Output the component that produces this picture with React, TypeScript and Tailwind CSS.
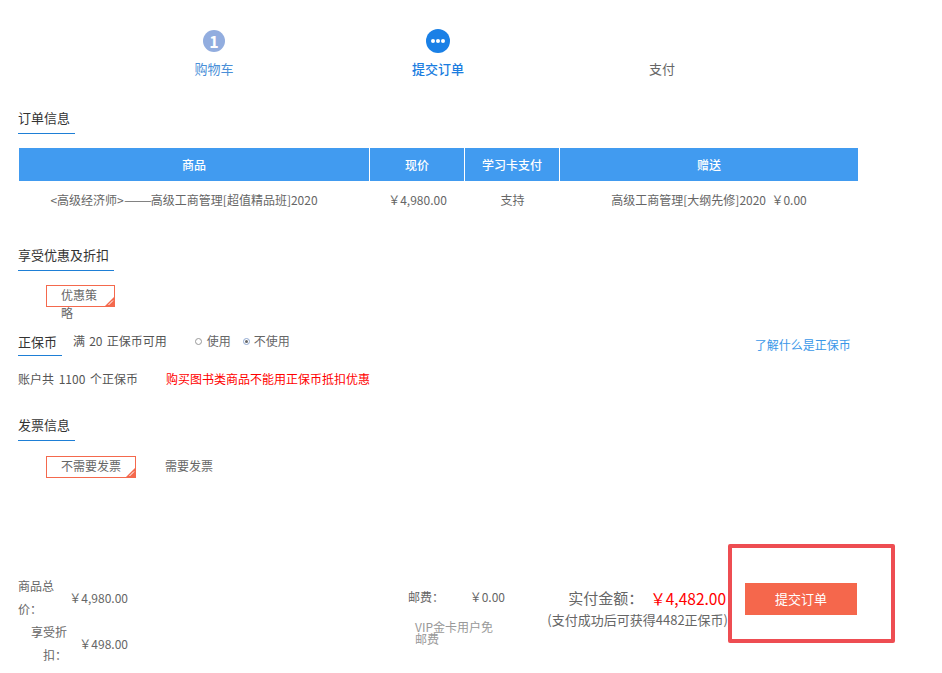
import React from "react";

const columns = [
  {
    title: "商品",
    width: "w-[351px]",
    cell: "pr-[21px]",
    value: (
      <>
        {"<高级经济师>"}
        <span className="mr-[7px] inline-block origin-left scale-x-[1.39]">——</span>
        高级工商管理[超值精品班]2020
      </>
    ),
  },
  { title: "现价", width: "w-[95px]", cell: "", value: "￥4,980.00" },
  { title: "学习卡支付", width: "w-[95px]", cell: "", value: "支持" },
  { title: "赠送", width: "w-[298px]", cell: "", value: "高级工商管理[大纲先修]2020  ￥0.00" },
];

function SectionTitle({ children, width }: { children: React.ReactNode; width: string }) {
  return (
    <div className={`${width} h-[23px] border-b border-[#1e7fd6] text-[13px] leading-[14px] text-[#333]`}>
      {children}
    </div>
  );
}

function OptionTag({ children, width }: { children: React.ReactNode; width: string }) {
  return (
    <div className={`${width} relative h-[22px] border border-[#f4694d] px-[14px] text-[12px] leading-[18px] text-[#666]`}>
      {children}
      {/* selected corner */}
      <svg className="absolute bottom-0 right-0" width="9" height="9" viewBox="0 0 9 9">
        <path d="M9 0V9H0Z" fill="#f4694d" />
        <path d="M3.5 8L8 3.5" stroke="#fff" strokeWidth="1" />
      </svg>
    </div>
  );
}

function Radio({ checked }: { checked?: boolean }) {
  return (
    <span className={`flex h-[7px] w-[7px] items-center justify-center rounded-full border ${checked ? "border-[#8fa8d0]" : "border-[#999]"}`}>
      {checked && <span className="h-[3px] w-[3px] rounded-full bg-[#666]" />}
    </span>
  );
}

export default function App() {
  return (
    <div lang="zh-CN" className="relative h-[673px] w-[942px] overflow-hidden bg-white pl-[18px] font-['Noto_Sans_CJK_SC',sans-serif] text-[12px] text-[#666]">
      {/* steps */}
      <div className="ml-[84px] flex w-[672px] pt-[29px] text-[13px]">
        <div className="flex w-[224px] flex-col items-center text-[#4a8fd8]">
          <div className="mt-[1px] flex h-[22px] w-[22px] items-center justify-center rounded-full bg-[#92addf] text-[16px] font-bold leading-none text-white">1</div>
          <div className="mt-[7px] leading-[19px]">购物车</div>
        </div>
        <div className="flex w-[224px] flex-col items-center font-medium text-[#1a7de0]">
          <div className="flex h-[24px] w-[24px] items-center justify-center gap-[1px] rounded-full bg-[#1a80e6]">
            <span className="h-[4px] w-[4px] rounded-full bg-white" />
            <span className="h-[4px] w-[4px] rounded-full bg-white" />
            <span className="h-[4px] w-[4px] rounded-full bg-white" />
          </div>
          <div className="mt-[6px] leading-[19px]">提交订单</div>
        </div>
        <div className="flex w-[224px] flex-col items-center">
          <div className="h-[24px]" />
          <div className="mt-[6px] leading-[19px]">支付</div>
        </div>
      </div>

      {/* order info */}
      <div className="mt-[33px]">
        <SectionTitle width="w-[57px]">订单信息</SectionTitle>
      </div>
      <div className="ml-[1px] mt-[14px] w-[839px]">
        <div className="flex h-[33px] bg-[#419bf0] text-[12px] font-medium text-white">
          {columns.map((c, i) => (
            <div key={c.title} className={`${c.width} flex items-center justify-center ${i < 3 ? "border-r border-white" : ""}`}>
              {c.title}
            </div>
          ))}
        </div>
        <div className="flex h-[38px]">
          {columns.map((c) => (
            <div key={c.title} className={`${c.width} ${c.cell} flex items-center justify-center whitespace-pre`}>
              {c.value}
            </div>
          ))}
        </div>
      </div>

      {/* discounts */}
      <div className="mt-[29px]">
        <SectionTitle width="w-[96px]">享受优惠及折扣</SectionTitle>
      </div>
      <div className="ml-[28px] mt-[14px]">
        <OptionTag width="w-[69px]">优惠策略</OptionTag>
      </div>
      <div className="mt-[27px] flex items-start">
        <div className="mt-[1px] h-[21px] w-[44px] border-b border-[#1e7fd6] text-[13px] leading-[14px] text-[#333]">正保币</div>
        <div className="ml-[11px] text-[12px] leading-[14px] text-[#555] [word-spacing:1.5px]">满 20 正保币可用</div>
        <div className="ml-[28px] flex items-center gap-[5px] leading-[14px]">
          <Radio />
          <span>使用</span>
        </div>
        <div className="ml-[12px] flex items-center gap-[4px] leading-[14px]">
          <Radio checked />
          <span>不使用</span>
        </div>
        <div className="ml-[465px] mt-[4px] leading-[14px] text-[#3a97e8]">了解什么是正保币</div>
      </div>
      <div className="mt-[14px] flex leading-[18px] text-[#555]">
        <span className="[word-spacing:2px]">账户共 1100 个正保币</span>
        <span className="ml-[28px] text-[#f00]">购买图书类商品不能用正保币抵扣优惠</span>
      </div>

      {/* invoice */}
      <div className="mt-[30px]">
        <SectionTitle width="w-[57px]">发票信息</SectionTitle>
      </div>
      <div className="ml-[28px] mt-[15px] flex items-center">
        <OptionTag width="w-[90px]">不需要发票</OptionTag>
        <span className="mb-[2px] ml-[29px]">需要发票</span>
      </div>

      {/* totals */}
      <div className="mt-[96px] flex items-start">
        <div className="w-[110px] leading-[23px]">
          <div className="flex items-center justify-between">
            <span className="w-[36px]">商品总价：</span>
            <span>￥4,980.00</span>
          </div>
          <div className="flex items-center justify-between pl-[13px]">
            <span className="w-[36px] text-right">享受折扣：</span>
            <span>￥498.00</span>
          </div>
        </div>
        <div className="ml-[280px] mt-[11px] w-[97px]">
          <div className="flex items-center justify-between leading-[23px]">
            <span>邮费：</span>
            <span>￥0.00</span>
          </div>
          <div className="mt-[13px] w-[90px] pl-[7px] leading-[12px] text-[#999]">VIP金卡用户免邮费</div>
        </div>
        <div className="ml-[40px] mt-[13px] flex w-[183px] flex-col items-end">
          <div className="flex items-center pr-[2px] leading-[22px]">
            <span className="text-[15px]">实付金额：</span>
            <span className="ml-[7px] text-[15.5px] text-[#f00]">￥4,482.00</span>
          </div>
          <div className="whitespace-nowrap text-[13px] leading-[22px]">(支付成功后可获得4482正保币)</div>
        </div>
        <div className="ml-[17px] mt-[9px] flex h-[32px] w-[112px] items-center justify-center bg-[#f5674c] text-[13px] text-white">提交订单</div>
      </div>

      {/* annotation box drawn over the screenshot */}
      <div className="absolute left-[728px] top-[544px] h-[99px] w-[167px] rounded-[2px] border-[4px] border-[#ee4d52]" />
    </div>
  );
}
